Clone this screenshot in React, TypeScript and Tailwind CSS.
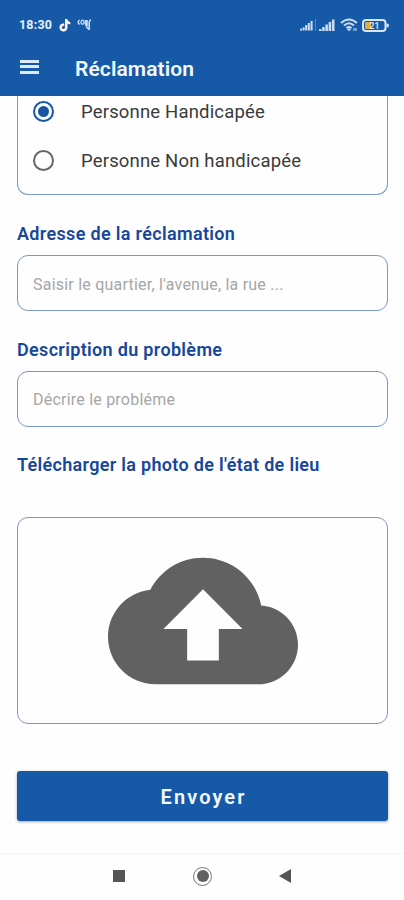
import { useState } from 'react'

const OPTIONS = ['Personne Handicapée', 'Personne Non handicapée']

function TikTokIcon() {
  const note = 'M6 1h2.2c.2 1.7 1.2 2.7 2.8 2.9v2.2c-1.1 0-2-.3-2.8-.9V9.3a3.9 3.9 0 1 1-3.3-3.8v2.3a1.7 1.7 0 1 0 1.1 1.6z'
  return (
    <svg viewBox="0 0 12 14" className="h-[14px] w-3" aria-hidden="true">
      <path d={note} fill="#e58aa6" transform="translate(.5 .4)" />
      <path d={note} fill="#fff" />
    </svg>
  )
}

function CarrierIcon() {
  return (
    <svg viewBox="0 0 15 12" className="h-3 w-[15px]" fill="none" stroke="#c9ddf5" aria-hidden="true">
      <path d="M2.5 1Q0 3 2.5 5.5" strokeWidth="1.5" />
      <ellipse cx="5.5" cy="3.2" rx="1.5" ry="2" strokeWidth="1.3" />
      <path d="M14 1q-1.8 0-1.8 3v7M8.5 1v4q0 1.5 1.5 1.5V1M9 7.500l2.500 2.500" strokeWidth="1.6" />
    </svg>
  )
}

function Signal({ className }: { className: string }) {
  return (
    <svg viewBox="0 0 16 12" className={className} fill="#c9ddf5" aria-hidden="true">
      <path d="M0 10h2.500v2H0zM3.200 8h2.500v4H3.200zM6.400 5.500h2.500V12H6.400zM9.600 3h2.500v9H9.600zM12.900 .500h2.600V12h-2.600z" />
    </svg>
  )
}

function StatusBar() {
  return (
    <div className="flex h-[50px] items-center justify-between pl-[19px] pr-[15px]">
      <div className="flex items-center">
        <span className="w-10 text-[12.5px] font-bold tracking-[0.2px] text-[#e6f0fc]">18:30</span>
        <TikTokIcon />
        <span className="ml-[6px] flex">
          <CarrierIcon />
        </span>
      </div>
      <div className="flex items-center">
        <Signal className="mt-px h-[11px] w-[13px]" />
        <span className="ml-[2px] h-3 w-px bg-[#4f86c4]" />
        <Signal className="ml-[3px] h-3 w-4" />
        <svg viewBox="0 0 18 14" className="ml-[5px] h-[14px] w-[18px]" fill="none" stroke="#c9ddf5" aria-hidden="true">
          <path d="M1 5q8-7 16 0M4 7.500q5-4.500 10 0M6.500 10q2.500-2 5 0" strokeWidth="2" />
          <path d="M7.500 11h3L9 12.800z" fill="#c9ddf5" />
          <path d="M14 10v3M16 10v3" />
        </svg>
        <svg viewBox="0 0 27 13" className="ml-1 h-[13px] w-[27px]" aria-hidden="true">
          <rect x="1" y="1" width="22.5" height="11" rx="3" fill="none" stroke="#d7e5f7" strokeWidth="2" />
          <rect x="3" y="3" width="6" height="7" rx="1" fill="#e2ae38" />
          <path d="M24.500 4.500h.5a1.500 1.500 0 0 1 0 4h-.5z" fill="#d7e5f7" />
          <text x="7.5" y="9.7" fontSize="8.5" fontWeight="700" fill="#d7e5f7">21</text>
        </svg>
      </div>
    </div>
  )
}

function Radio({ label, checked, onSelect }: { label: string; checked: boolean; onSelect: () => void }) {
  return (
    <button type="button" role="radio" aria-checked={checked} onClick={onSelect} className="flex h-[49px] w-full items-center pl-[15px]">
      <span
        className={`flex h-[21px] w-[21px] items-center justify-center rounded-full border-2 ${
          checked ? 'border-[#1a55a8]' : 'border-[#666]'
        }`}
      >
        {checked && <span className="h-[11px] w-[11px] rounded-full bg-[#1654a6]" />}
      </span>
      <span className="ml-[27px] pt-[2px] text-[18.5px] tracking-[0.17px] text-[#3a3a3a]">{label}</span>
    </button>
  )
}

function Field({ label, placeholder }: { label: string; placeholder: string }) {
  return (
    <label className="block h-[115.5px]">
      <span className="block h-[33px] text-[18px] font-semibold leading-6 tracking-[0.33px] text-[#17479c]">{label}</span>
      <input
        placeholder={placeholder}
        className="block h-[56px] w-full rounded-[11px] border border-[#7b98c4] px-[15px] pt-[2px] text-[16px] tracking-[0.22px] text-[#333] outline-none placeholder:text-[#a6a6a6]"
      />
    </label>
  )
}

export default function App() {
  const [selected, setSelected] = useState(0)

  return (
    <div className="flex h-[900px] w-[404px] flex-col overflow-hidden bg-[#fefefe] font-['Roboto',sans-serif]">
      <header className="h-24 shrink-0 bg-[#165aa7]">
        <StatusBar />
        <div className="flex h-9 items-center pl-5">
          <button type="button" aria-label="Menu" className="-mt-px flex w-[19px] flex-col gap-[2.5px] pb-[2px]">
            <span className="h-[3px] bg-[#dceafa]" />
            <span className="h-[3px] bg-[#dceafa]" />
            <span className="h-[3px] bg-[#dceafa]" />
          </button>
          <h1 className="ml-9 pt-[3px] text-[21px] font-semibold tracking-[0.1px] text-[#f3f8ff]">Réclamation</h1>
        </div>
      </header>

      <main className="flex flex-1 flex-col pl-[17px] pr-4">
        <div role="radiogroup" className="h-[99px] shrink-0 rounded-b-[11px] border border-t-0 border-[#7b98c4]">
          <div className="-mt-[9px]">
            {OPTIONS.map((label, i) => (
              <Radio key={label} label={label} checked={selected === i} onSelect={() => setSelected(i)} />
            ))}
          </div>
        </div>

        <div className="mt-[27px]">
          <Field label="Adresse de la réclamation" placeholder="Saisir le quartier, l'avenue, la rue ..." />
          <Field label="Description du problème" placeholder="Décrire le probléme" />
        </div>

        <h2 className="text-[18px] font-semibold leading-6 tracking-[0.31px] text-[#17479c]">Télécharger la photo de l'état de lieu</h2>
        <button
          type="button"
          aria-label="Télécharger"
          className="mt-10 flex h-[207px] shrink-0 items-center justify-center rounded-[11px] border border-[#7b98c4]"
        >
          <svg viewBox="0 0 24 24" className="h-[190px] w-[190px]" fill="#616161" aria-hidden="true">
            <path d="M19.350 10.040C18.670 6.590 15.640 4 12 4 9.110 4 6.600 5.640 5.350 8.040 2.340 8.360 0 10.910 0 14c0 3.310 2.690 6 6 6h13c2.760 0 5-2.240 5-5 0-2.640-2.050-4.780-4.650-4.960zM14 13v4h-4v-4H7l5-5 5 5h-3z" />
          </svg>
        </button>

        <button
          type="button"
          className="mt-[47px] h-[50px] shrink-0 rounded-[3px] bg-[#165aa7] pl-[2px] pt-[2px] text-[20px] font-semibold tracking-[2.1px] text-[#f3f8ff] shadow-[0_1px_3px_rgba(0,0,0,.35)]"
        >
          Envoyer
        </button>
      </main>

      <nav className="grid h-[47px] shrink-0 grid-cols-[84px_84px_84px] items-center justify-center justify-items-center border-t border-[#f3f3f3] pb-[2px]">
        <span className="ml-[2px] h-3 w-3 bg-[#555]" />
        <span className="ml-px flex h-[19px] w-[19px] items-center justify-center rounded-full border-[1.5px] border-[#777]">
          <span className="h-3 w-3 rounded-full bg-[#606060]" />
        </span>
        <svg viewBox="0 0 12 14" className="mr-[2px] h-[14px] w-3" fill="#555" aria-hidden="true">
          <path d="M0 7 12 0v14z" />
        </svg>
      </nav>
    </div>
  )
}
